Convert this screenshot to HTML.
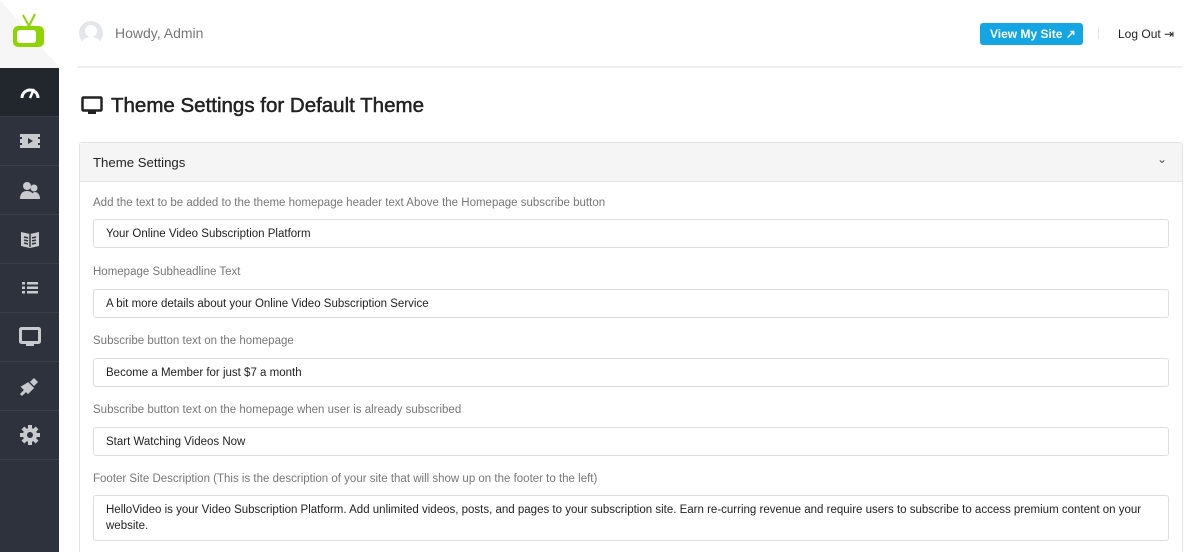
<!DOCTYPE html>
<html><head><meta charset="utf-8"><style>
*{box-sizing:border-box;margin:0;padding:0}
html,body{width:1200px;height:552px;overflow:hidden}
body{background:#fff;font-family:"Liberation Sans",Arial,sans-serif;position:relative}
.logo{position:absolute;left:0;top:0;width:60px;height:68px;background:linear-gradient(to top right,#f6f6f6 50%,#fff 50%)}
.side{position:absolute;left:0;top:68px;width:59px;height:484px;background:#2d323c}
.side .it{height:49px;border-bottom:1px solid #3a3f49;display:flex;align-items:center;justify-content:center}
.side .it.act{background:#22262d}
.top{position:absolute;left:77px;right:17px;top:0;height:68px;border-bottom:2px solid #f0f0f0}
.av{position:absolute;left:2px;top:21px;width:24px;height:24px;border-radius:50%;background:#e4e6ea;overflow:hidden}
.howdy{position:absolute;left:38px;top:25px;font-size:14px;color:#777}
.btn{position:absolute;left:903px;top:23px;width:103px;height:22px;background:#14a5e3;border-radius:3px;color:#fff;font-size:12px;font-weight:bold;line-height:22px;padding-left:10px}
.sep{position:absolute;left:1021px;top:27px;width:1px;height:12px;background:#e5e5e5}
.logout{position:absolute;left:1041px;top:27px;font-size:12px;color:#222}
h1{position:absolute;left:111px;top:94px;font-size:20.5px;font-weight:normal;color:#222;-webkit-text-stroke:0.5px #222}
.panel{position:absolute;left:79px;top:142px;width:1104px;height:420px;border:1px solid #e3e3e3;border-radius:3px}
.ph{height:39px;background:#f5f5f6;border-bottom:1px solid #e3e3e3;font-size:13.2px;color:#222;padding:12px 0 0 13px;position:relative}
.lab{position:absolute;left:13px;font-size:11.5px;color:#777}
.inp{position:absolute;left:13px;width:1076px;height:29px;border:1px solid #dedede;border-radius:3px;font-size:11.5px;color:#222;padding:8px 0 0 12px}
</style></head><body>
<div class="logo"><svg width="60" height="68"><g stroke="#8fd400" stroke-width="2" fill="none"><line x1="29" y1="26" x2="23" y2="15"/><line x1="29" y1="26" x2="35" y2="14"/></g><rect x="13" y="26" width="31" height="21" rx="5" fill="#8fd400"/><rect x="17" y="30" width="19" height="13" rx="3" fill="#fff"/></svg></div>
<div class="side">
<div class="it act"><svg width="22" height="16" viewBox="0 0 22 16"><path d="M3 14A8 8 0 0 1 19 14" stroke="#fff" stroke-width="3" fill="none"/><path d="M11 14L15 5" stroke="#fff" stroke-width="2.5"/></svg></div>
<div class="it"><svg width="22" height="16"><rect x="1" y="1" width="20" height="14" fill="#c8cacd"/><path d="M9 5l5 3-5 3z" fill="#2d323c"/><g fill="#2d323c"><rect x="1" y="4" width="2" height="2"/><rect x="1" y="10" width="2" height="2"/><rect x="19" y="4" width="2" height="2"/><rect x="19" y="10" width="2" height="2"/></g></svg></div>
<div class="it"><svg width="22" height="20"><circle cx="8" cy="6" r="4" fill="#c8cacd"/><path d="M1 19c0-6 3-8 7-8s7 2 7 8z" fill="#c8cacd"/><circle cx="15" cy="8" r="3.5" fill="#c8cacd"/><path d="M12 19c0-5 2-7 4-7s5 2 5 7z" fill="#c8cacd"/></svg></div>
<div class="it"><svg width="20" height="18"><path d="M1 2l9 2 9-2v14l-9 2-9-2z" fill="#c8cacd"/><g stroke="#2d323c" stroke-width="1.5"><line x1="10" y1="4" x2="10" y2="17"/><line x1="4" y1="7" x2="8" y2="8"/><line x1="4" y1="10" x2="8" y2="11"/><line x1="4" y1="13" x2="8" y2="14"/><line x1="12" y1="8" x2="16" y2="7"/><line x1="12" y1="11" x2="16" y2="10"/><line x1="12" y1="14" x2="16" y2="13"/></g></svg></div>
<div class="it"><svg width="16" height="12" fill="#c8cacd"><rect x="0" y="0" width="3" height="2.5"/><rect x="5" y="0" width="11" height="2.5"/><rect x="0" y="4.5" width="3" height="2.5"/><rect x="5" y="4.5" width="11" height="2.5"/><rect x="0" y="9" width="3" height="2.5"/><rect x="5" y="9" width="11" height="2.5"/></svg></div>
<div class="it"><svg width="22" height="20"><rect x="1.5" y="1.5" width="19" height="14" rx="1" fill="none" stroke="#c8cacd" stroke-width="3"/><rect x="7" y="16" width="8" height="3" fill="#c8cacd"/></svg></div>
<div class="it"><svg width="22" height="22"><path d="M2 20l5-5M9 9l4 4-4 4-5-5zM12 8l4-4M14 10l4-4" stroke="#c8cacd" stroke-width="3" fill="#c8cacd"/></svg></div>
<div class="it"><svg width="20" height="20" viewBox="0 0 20 20"><g fill="#c8cacd"><circle cx="10" cy="10" r="7"/><rect x="8" y="0" width="4" height="20"/><rect x="0" y="8" width="20" height="4"/><rect x="8" y="0" width="4" height="20" transform="rotate(45 10 10)"/><rect x="8" y="0" width="4" height="20" transform="rotate(-45 10 10)"/></g><circle cx="10" cy="10" r="3" fill="#2d323c"/></svg></div>
</div>
<div class="top">
<div class="av"><svg width="24" height="24"><circle cx="12" cy="10" r="6" fill="#fff"/><path d="M2 26c0-8 5-10 10-10s10 2 10 10z" fill="#fff"/></svg></div>
<div class="howdy">Howdy, Admin</div>
<div class="btn">View My Site &#x2197;</div>
<div class="sep"></div>
<div class="logout">Log Out &#x21E5;</div>
</div>
<svg style="position:absolute;left:81px;top:96px" width="22" height="20"><rect x="1.5" y="1.5" width="19" height="13" rx="1" fill="none" stroke="#222" stroke-width="2.5"/><rect x="7" y="15" width="8" height="3" fill="#222"/></svg>
<h1>Theme Settings for Default Theme</h1>
<div class="panel">
<div class="ph">Theme Settings<span style="position:absolute;right:15px;top:9px;font-size:12px;color:#555">&#x2304;</span></div>
<div class="lab" style="top:54px">Add the text to be added to the theme homepage header text Above the Homepage subscribe button</div>
<div class="inp" style="top:76px">Your Online Video Subscription Platform</div>
<div class="lab" style="top:123px">Homepage Subheadline Text</div>
<div class="inp" style="top:146px">A bit more details about your Online Video Subscription Service</div>
<div class="lab" style="top:192px">Subscribe button text on the homepage</div>
<div class="inp" style="top:215px">Become a Member for just $7 a month</div>
<div class="lab" style="top:261px">Subscribe button text on the homepage when user is already subscribed</div>
<div class="inp" style="top:284px">Start Watching Videos Now</div>
<div class="lab" style="top:330px">Footer Site Description (This is the description of your site that will show up on the footer to the left)</div>
<div class="inp" style="top:352px;height:46px;line-height:16px;padding:6px 12px 0 12px">HelloVideo is your Video Subscription Platform. Add unlimited videos, posts, and pages to your subscription site. Earn re-curring revenue and require users to subscribe to access premium content on your website.</div>
</div>
</body></html>
